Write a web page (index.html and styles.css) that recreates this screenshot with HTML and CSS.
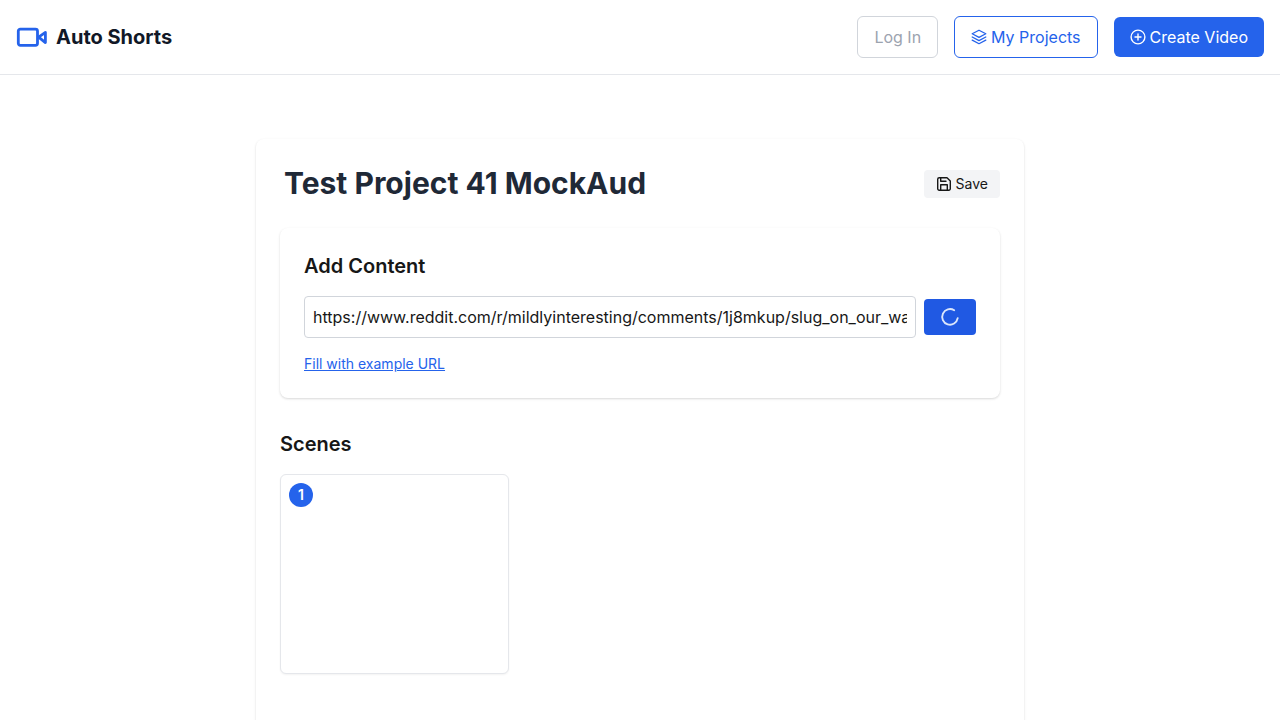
FILE: index.html
```html
<!DOCTYPE html>
<html lang="en">
<head>
<meta charset="utf-8">
<meta name="viewport" content="width=device-width, initial-scale=1">
<title>Auto Shorts</title>
<link rel="stylesheet" href="styles.css">
</head>
<body>
<header class="site-header">
  <a class="brand" href="#">
    <svg class="brand-icon" viewBox="0 0 32 32" fill="none" stroke="currentColor" stroke-width="2.8" stroke-linejoin="round" aria-hidden="true">
      <rect x="2.3" y="8.1" width="19.2" height="16.2" rx="2"/>
      <path d="M22.6 16.1 L29.4 11.4 V21.6 Z"/>
    </svg>
    <span>Auto Shorts</span>
  </a>
  <nav class="site-nav">
    <button class="btn btn-muted" type="button" disabled>Log In</button>
    <a class="btn btn-outline" href="#">
      <svg class="icon" viewBox="0 0 16 16" fill="none" stroke="currentColor" stroke-width="1.3" stroke-linejoin="round" stroke-linecap="round" aria-hidden="true">
        <path d="M8 1.2 14.8 4.8 8 8.4 1.2 4.8Z"/>
        <path d="M1.2 8 8 11.6 14.8 8"/>
        <path d="M1.2 11.1 8 14.7 14.8 11.1"/>
      </svg>
      <span>My Projects</span>
    </a>
    <a class="btn btn-primary" href="#">
      <svg class="icon" viewBox="0 0 16 16" fill="none" stroke="currentColor" stroke-width="1.4" stroke-linecap="round" aria-hidden="true">
        <circle cx="8" cy="8" r="6.9"/>
        <path d="M8 5v6M5 8h6"/>
      </svg>
      <span>Create Video</span>
    </a>
  </nav>
</header>
<main class="page">
  <section class="project">
    <div class="project-head">
      <h1 class="project-title">Test Project 41 MockAud</h1>
      <button class="save" type="button">
        <svg class="icon" viewBox="0 0 16 16" fill="none" stroke="currentColor" stroke-width="1.4" stroke-linejoin="round" stroke-linecap="round" aria-hidden="true">
          <path d="M3.2 1.7H11L14.3 5V12.8a1.5 1.5 0 0 1-1.5 1.5H3.2a1.5 1.5 0 0 1-1.5-1.5V3.2a1.5 1.5 0 0 1 1.5-1.5Z"/>
          <path d="M4.7 2V5.3H10M4.7 14V8.7H11.3V14"/>
        </svg>
        <span>Save</span>
      </button>
    </div>
    <form class="content-card">
      <h2 class="heading"><label for="content-url">Add Content</label></h2>
      <div class="url-row">
        <input class="url-input" id="content-url" type="text" value="https://www.reddit.com/r/mildlyinteresting/comments/1j8mkup/slug_on_our_wall_looks_like_a_leaf/">
        <button class="submit" type="button" aria-label="Loading content">
          <svg class="spinner" viewBox="0 0 20 20" fill="none" stroke="currentColor" stroke-width="1.9" stroke-linecap="round" aria-hidden="true">
            <path d="M14.2 3.3A7.8 7.8 0 1 0 17.7 11.2"/>
          </svg>
        </button>
      </div>
      <button class="example-link" type="button">Fill with example URL</button>
    </form>
    <section class="scenes">
      <h2 class="heading">Scenes</h2>
      <div class="scene-grid">
        <article class="scene"><span class="scene-number">1</span></article>
      </div>
    </section>
  </section>
</main>
</body>
</html>
```

FILE: styles.css
```css
* { box-sizing: border-box; }

html { scrollbar-width: none; }

body {
  margin: 0;
  min-height: 100vh;
  display: flex;
  flex-direction: column;
  background: #fff;
  color: #171717;
  font: 16px/24px Inter, "Liberation Sans", sans-serif;
}

h1, h2 { margin: 0; }
a { color: inherit; text-decoration: none; }
button, input { font: inherit; color: inherit; margin: 0; }
button { border: 0; cursor: pointer; }

.site-header {
  display: flex;
  align-items: center;
  justify-content: space-between;
  padding: 16px;
  border-bottom: 1px solid #e5e7eb;
}

.brand {
  display: flex;
  align-items: center;
  gap: 8px;
  color: #111827;
  font-size: 20px;
  line-height: 28px;
  font-weight: 700;
}
.brand-icon { width: 32px; height: 32px; color: #2563eb; }

.site-nav { display: flex; align-items: center; gap: 16px; }
.btn {
  display: flex;
  align-items: center;
  gap: 4px;
  padding: 8px 16px;
  border-radius: 6px;
  font-weight: 400;
}
.btn-muted { background: #fff; border: 1px solid #d1d5db; color: #9ca3af; cursor: not-allowed; }
.btn-outline { border: 1px solid #2563eb; color: #2563eb; }
.btn-primary { background: #2563eb; color: #fff; }
.icon { width: 16px; height: 16px; flex: none; }

.page { flex: 1; display: flex; justify-content: center; padding: 64px 0; }
.project {
  width: 100%;
  max-width: 768px;
  padding: 24px 24px 64px;
  background: #fff;
  border-radius: 8px;
  box-shadow: 0 1px 3px rgba(0, 0, 0, 0.1), 0 1px 2px rgba(0, 0, 0, 0.06);
}
.project-head {
  display: flex;
  align-items: center;
  justify-content: space-between;
  margin-bottom: 24px;
}
.project-title {
  padding: 2px 4px;
  border-bottom: 1px solid transparent;
  color: #1f2937;
  font-size: 30px;
  line-height: 36px;
  font-weight: 700;
}
.save {
  display: flex;
  align-items: center;
  gap: 4px;
  padding: 4px 12px;
  background: #f3f4f6;
  border-radius: 4px;
  font-size: 14px;
  line-height: 20px;
}

.content-card {
  padding: 24px;
  background: #fff;
  border-radius: 8px;
  box-shadow: 0 1px 3px rgba(0, 0, 0, 0.1), 0 1px 2px rgba(0, 0, 0, 0.06);
}
.heading {
  margin-bottom: 16px;
  font-size: 20px;
  line-height: 28px;
  font-weight: 600;
}
.url-row { display: flex; align-items: center; gap: 8px; margin-bottom: 16px; }
.url-input {
  flex: 1;
  min-width: 0;
  height: 42px;
  padding: 8px;
  background: #fff;
  border: 1px solid #d1d5db;
  border-radius: 4px;
}
.submit {
  display: flex;
  padding: 8px 16px;
  background: #2059e3;
  border-radius: 4px;
  color: #dbe6fb;
}
.spinner { width: 20px; height: 20px; }
.example-link {
  display: block;
  padding: 0;
  background: none;
  color: #2563eb;
  font-size: 14px;
  line-height: 20px;
  text-decoration: underline;
}

.scenes { margin-top: 32px; }
.scene-grid { display: grid; grid-template-columns: repeat(3, 1fr); gap: 16px; }
.scene {
  min-height: 200px;
  padding: 8px;
  background: #fff;
  border: 1px solid #e5e7eb;
  border-radius: 6px;
  box-shadow: 0 1px 2px rgba(0, 0, 0, 0.05);
}
.scene-number {
  display: flex;
  align-items: center;
  justify-content: center;
  width: 24px;
  height: 24px;
  border-radius: 50%;
  background: #2563eb;
  color: #fff;
  font-size: 14px;
  line-height: 20px;
  font-weight: 600;
}
```
